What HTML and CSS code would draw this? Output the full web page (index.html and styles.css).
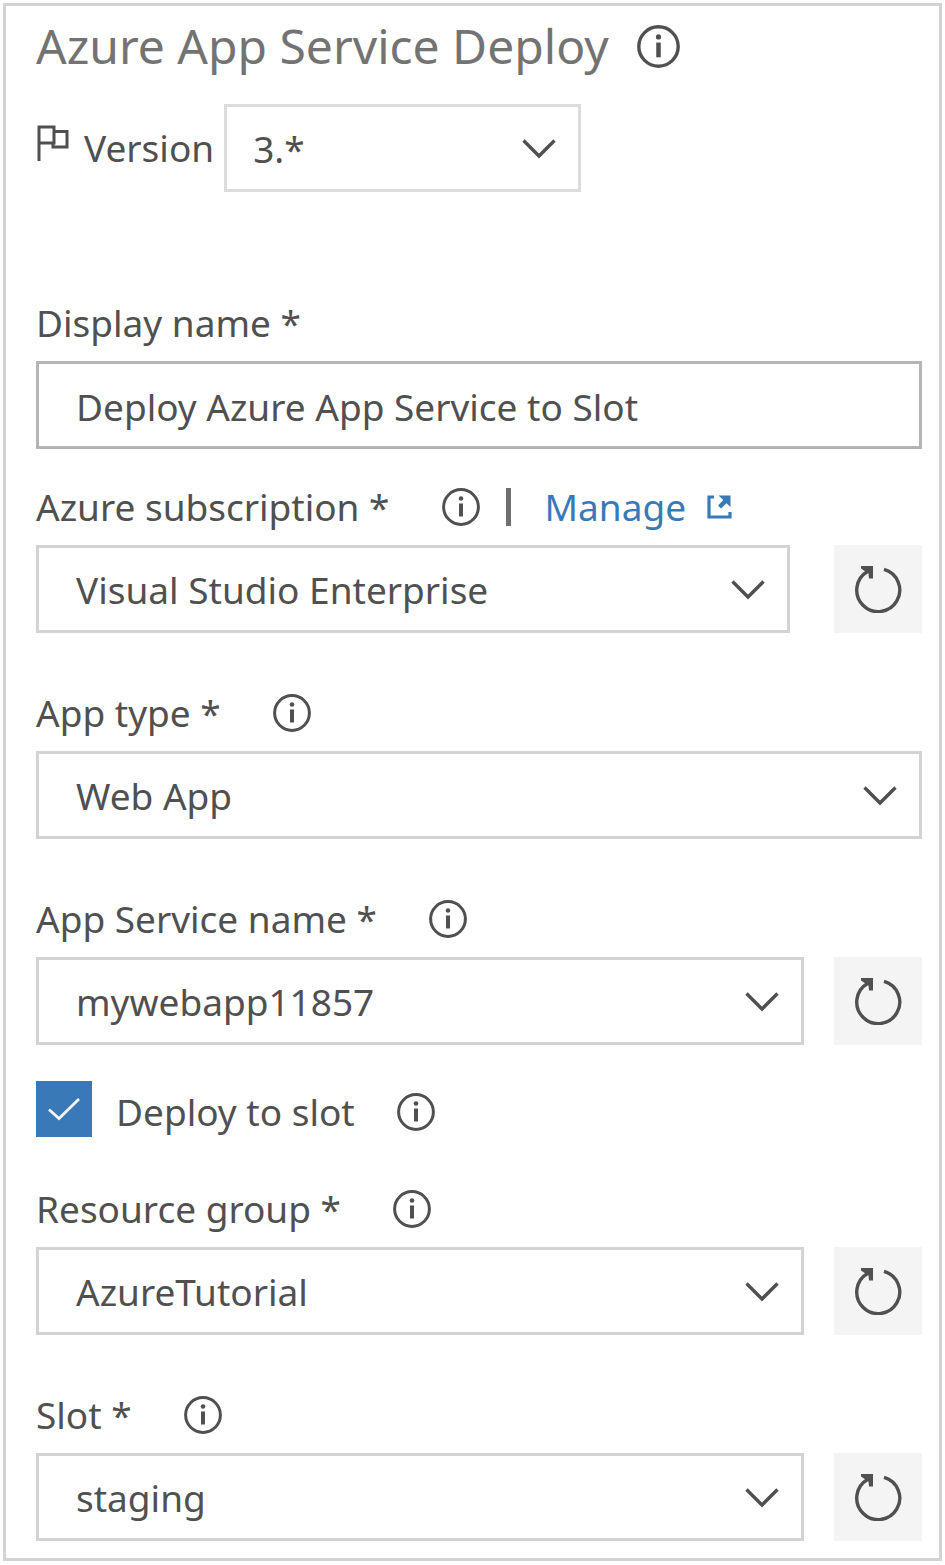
FILE: index.html
```html
<!DOCTYPE html>
<html lang="en">
<head>
<meta charset="utf-8">
<meta name="viewport" content="width=device-width, initial-scale=1">
<title>Azure App Service Deploy</title>
<link rel="stylesheet" href="styles.css">
</head>
<body>
<svg class="sprite" aria-hidden="true">
  <symbol id="info" viewBox="0 0 38 38">
    <circle cx="19" cy="19" r="17.4" fill="none" stroke="currentColor" stroke-width="3"/>
    <path d="M19 15.5V28.5" fill="none" stroke="currentColor" stroke-width="4"/>
    <circle cx="19" cy="10.5" r="2.3" fill="currentColor"/>
  </symbol>
  <symbol id="chevron" viewBox="0 0 34 20">
    <path d="M1.5 1.5L17 17L32.5 1.5" fill="none" stroke="currentColor" stroke-width="3.4"/>
  </symbol>
  <symbol id="refresh" viewBox="0 0 48 48">
    <path d="M30 4.400A21.500 21.500 0 1 1 13.500 6.500" fill="none" stroke="currentColor" stroke-width="3.4"/>
    <path d="M7 1H19V13.500H15L14.500 8.500L7 3.500Z" fill="currentColor"/>
  </symbol>
</svg>
<main class="panel">
  <header class="title-row">
    <h1 class="title">Azure App Service Deploy</h1>
    <button class="info info-large" type="button" aria-label="About this task"><svg><use href="#info"/></svg></button>
  </header>

  <div class="version-row">
    <svg class="flag" viewBox="0 0 34 38" aria-hidden="true">
      <path d="M3 37V3H18V19H3M18 7.500H31V23H17V19" fill="none" stroke="currentColor" stroke-width="3"/>
    </svg>
    <label class="version-label" for="version">Version</label>
    <div class="picker picker-version">
      <select class="control" id="version"><option>3.*</option></select>
      <svg class="chevron" aria-hidden="true"><use href="#chevron"/></svg>
    </div>
  </div>

  <div class="field field-first">
    <div class="label-row"><label for="display">Display name *</label></div>
    <input class="control control-text" id="display" type="text" value="Deploy Azure App Service to Slot">
  </div>

  <div class="field field-near">
    <div class="label-row">
      <label for="subscription">Azure subscription *</label>
      <div class="extras">
        <button class="info" type="button" aria-label="About Azure subscription"><svg><use href="#info"/></svg></button>
        <span class="divider"></span>
        <a class="manage" href="#">Manage
          <svg class="external" viewBox="0 0 26 26" aria-hidden="true">
            <path d="M8 3H3V23H24V18" fill="none" stroke="currentColor" stroke-width="3.200"/>
            <path d="M12.500 1.500H24.500V13L20.500 9.200L15 14.500L12 11.500L17.300 6Z" fill="currentColor"/>
          </svg>
        </a>
      </div>
    </div>
    <div class="control-row control-row-wide">
      <div class="picker">
        <select class="control" id="subscription"><option>Visual Studio Enterprise</option></select>
        <svg class="chevron" aria-hidden="true"><use href="#chevron"/></svg>
      </div>
      <button class="refresh" type="button" aria-label="Refresh subscriptions"><svg><use href="#refresh"/></svg></button>
    </div>
  </div>

  <div class="field">
    <div class="label-row">
      <label for="apptype">App type *</label>
      <button class="info" type="button" aria-label="About App type"><svg><use href="#info"/></svg></button>
    </div>
    <div class="picker">
      <select class="control" id="apptype"><option>Web App</option></select>
      <svg class="chevron" aria-hidden="true"><use href="#chevron"/></svg>
    </div>
  </div>

  <div class="field">
    <div class="label-row">
      <label for="service">App Service name *</label>
      <button class="info" type="button" aria-label="About App Service name"><svg><use href="#info"/></svg></button>
    </div>
    <div class="control-row">
      <div class="picker">
        <select class="control" id="service"><option>mywebapp11857</option></select>
        <svg class="chevron" aria-hidden="true"><use href="#chevron"/></svg>
      </div>
      <button class="refresh" type="button" aria-label="Refresh app services"><svg><use href="#refresh"/></svg></button>
    </div>
  </div>

  <div class="check-row">
    <span class="check">
      <input class="check-box" id="deploy" type="checkbox" checked>
      <svg class="check-mark" viewBox="0 0 34 24" aria-hidden="true"><path d="M2 12.500L12 21.500L32 2" fill="none" stroke="currentColor" stroke-width="2.800"/></svg>
    </span>
    <label for="deploy">Deploy to slot</label>
    <button class="info" type="button" aria-label="About Deploy to slot"><svg><use href="#info"/></svg></button>
  </div>

  <div class="field field-group">
    <div class="label-row">
      <label for="group">Resource group *</label>
      <button class="info" type="button" aria-label="About Resource group"><svg><use href="#info"/></svg></button>
    </div>
    <div class="control-row">
      <div class="picker">
        <select class="control" id="group"><option>AzureTutorial</option></select>
        <svg class="chevron" aria-hidden="true"><use href="#chevron"/></svg>
      </div>
      <button class="refresh" type="button" aria-label="Refresh resource groups"><svg><use href="#refresh"/></svg></button>
    </div>
  </div>

  <div class="field">
    <div class="label-row">
      <label for="slot">Slot *</label>
      <button class="info" type="button" aria-label="About Slot"><svg><use href="#info"/></svg></button>
    </div>
    <div class="control-row">
      <div class="picker">
        <select class="control" id="slot"><option>staging</option></select>
        <svg class="chevron" aria-hidden="true"><use href="#chevron"/></svg>
      </div>
      <button class="refresh" type="button" aria-label="Refresh slots"><svg><use href="#refresh"/></svg></button>
    </div>
  </div>
</main>
</body>
</html>
```
FILE: styles.css
```css
* {
  box-sizing: border-box;
}

body {
  margin: 0;
  padding: 3px;
  background: #fff;
  color: #505050;
  font: 37px/40px "Segoe UI", "Noto Sans", sans-serif;
}

.sprite {
  position: absolute;
  width: 0;
  height: 0;
}

.panel {
  padding: 10px 17px 17px 30px;
  border: 3px solid #d2d4d4;
}

.title-row {
  display: flex;
  align-items: center;
  gap: 28px;
  height: 60px;
}

.title {
  margin: 0;
  color: #737373;
  font-size: 48px;
  font-weight: 400;
  line-height: 60px;
}

.info {
  flex: none;
  width: 38px;
  height: 38px;
  padding: 0;
  border: 0;
  background: none;
  color: #505050;
}

.info svg,
.refresh svg {
  display: block;
  width: 100%;
  height: 100%;
}

.info-large {
  width: 43px;
  height: 43px;
}

.version-row {
  display: flex;
  align-items: center;
  margin-top: 28px;
}

.flag {
  width: 34px;
  height: 38px;
  margin: 0 14px 10px 0;
}

.version-label {
  margin-right: 10px;
}

.picker {
  display: grid;
  flex: 1;
  align-items: center;
}

.picker > * {
  grid-area: 1 / 1;
}

.picker-version {
  flex: 0 1 357px;
}

.picker-version .control {
  padding-left: 26px;
  border-color: #dcdcdc;
}

.control {
  display: block;
  width: 100%;
  height: 88px;
  margin: 0;
  padding: 2px 70px 0 37px;
  border: 3px solid #d2d4d4;
  border-radius: 0;
  background: #fff;
  color: #505050;
  font: inherit;
  line-height: 56px;
  appearance: none;
}

.control-text {
  padding-right: 20px;
  border-color: #b4b6b6;
}

.chevron {
  justify-self: end;
  width: 34px;
  height: 20px;
  margin: 2px 25px 0 0;
  pointer-events: none;
}

.field {
  margin-top: 61px;
}

.field-first {
  margin-top: 112px;
}

.field-near {
  margin-top: 39px;
}

.field-group {
  margin-top: 53px;
}

.label-row {
  display: flex;
  align-items: center;
  gap: 52px;
  height: 38px;
  margin-bottom: 19px;
}

.extras {
  display: flex;
  align-items: center;
}

.divider {
  width: 5px;
  height: 38px;
  margin: 0 34px 0 26px;
  background: #707070;
}

.manage {
  display: flex;
  align-items: center;
  gap: 20px;
  color: #3a79b7;
  text-decoration: none;
}

.external {
  width: 26px;
  height: 26px;
}

.control-row {
  display: flex;
  gap: 30px;
}

.control-row-wide {
  gap: 44px;
}

.refresh {
  flex: none;
  width: 88px;
  height: 88px;
  padding: 20px;
  border: 0;
  background: #f4f4f4;
  color: #505050;
}

.check-row {
  display: flex;
  align-items: center;
  margin-top: 36px;
}

.check-row .info {
  margin-left: 42px;
}

.check-row > label,
.check-row > .info {
  margin-top: 6px;
}

.check {
  display: grid;
  place-items: center;
  margin-right: 24px;
}

.check > * {
  grid-area: 1 / 1;
}

.check-box {
  width: 56px;
  height: 56px;
  margin: 0;
  background: #3a79b7;
  appearance: none;
}

.check-mark {
  width: 34px;
  height: 24px;
  color: #f4f4f4;
  pointer-events: none;
}
```
